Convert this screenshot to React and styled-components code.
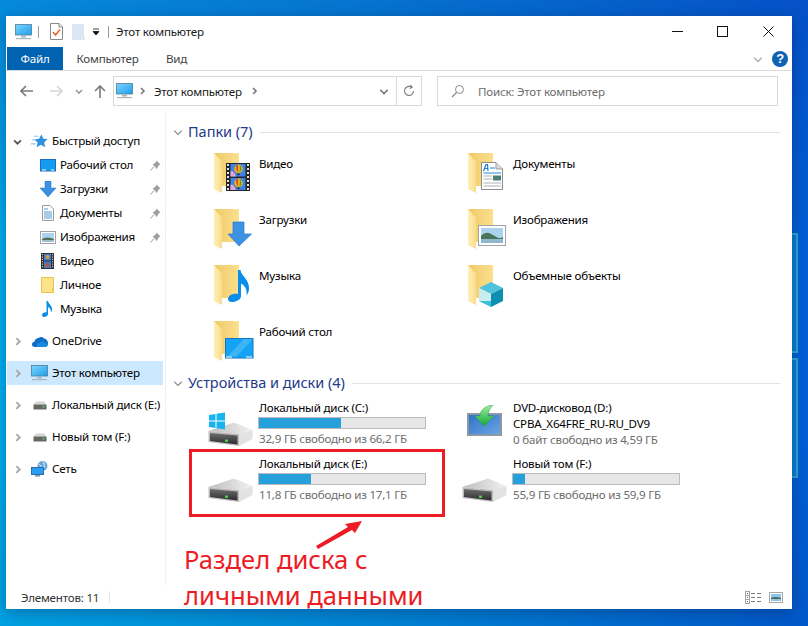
import React from "react";
import styled, { createGlobalStyle } from "styled-components";

const GlobalStyle = createGlobalStyle`
  html, body { margin: 0; padding: 0; height: 100%; overflow: hidden; }
  body { font-family: "Noto Sans", "Open Sans", sans-serif; font-size: 11.6px; letter-spacing: -0.22px; color: #000; }
  * { box-sizing: border-box; }
`;

const Desktop = styled.div`
  position: relative;
  width: 808px;
  height: 626px;
  padding: 16px 16px 17px 6px;
  background:
    linear-gradient(180deg, rgba(20, 50, 170, 0.3) 0, rgba(20, 50, 170, 0) 40%, rgba(0, 40, 120, 0) 70%, rgba(0, 30, 100, 0.1) 100%),
    linear-gradient(90deg, #00b0f0 0, #0090e0 45%, #005ed4 100%);
`;

const BackWindow = styled.div`
  position: absolute;
  left: 786px;
  top: ${(p) => p.$top}px;
  width: 12px;
  height: 120px;
  border: 2px solid #2fa8d0;
  background: #0a7ed8;
`;

const Win = styled.div`
  position: relative;
  display: flex;
  flex-direction: column;
  height: 100%;
  background: #fff;
  box-shadow: 0 3px 14px rgba(0, 20, 60, 0.35);
`;

const TitleBar = styled.div`
  display: flex;
  align-items: center;
  height: 31px;
  padding: 0 1px 0 9px;
`;

const QuickIcon = styled.span`
  display: flex;
  margin-left: ${(p) => p.$ml || 0}px;
  margin-right: ${(p) => p.$mr || 0}px;
`;

const Sep = styled.span`
  width: 1px;
  height: 12px;
  background: #9a9a9a;
  margin-right: ${(p) => p.$mr || 0}px;
`;

const TitleText = styled.span`
  flex: 1;
  color: #1a1a1a;
`;

const WinButton = styled.button`
  display: flex;
  align-items: center;
  justify-content: center;
  width: 45.5px;
  height: 31px;
  padding: 0;
  border: 0;
  background: none;
`;

const TabRow = styled.div`
  display: flex;
  align-items: center;
  height: 24px;
  padding-left: 1px;
  padding-right: 4px;
  border-bottom: 1px solid #dadada;
`;

const Tab = styled.div`
  display: flex;
  align-items: center;
  justify-content: center;
  height: 23px;
  width: ${(p) => p.$w}px;
  background: ${(p) => (p.$active ? "#0063b1" : "transparent")};
  color: ${(p) => (p.$active ? "#fff" : "#444")};
`;

const TabFill = styled.div`
  flex: 1;
`;

const HelpDot = styled.span`
  display: flex;
  align-items: center;
  justify-content: center;
  width: 16px;
  height: 16px;
  margin-left: 9px;
  border-radius: 50%;
  background: #0f62b4;
  color: #fff;
  font-family: "Liberation Sans", sans-serif;
  font-size: 13px;
  font-weight: 700;
`;

const NavRow = styled.div`
  display: flex;
  align-items: flex-start;
  height: 42px;
  padding: 5px 14px 0 0;
`;

const NavButtons = styled.div`
  display: flex;
  align-items: center;
  flex: none;
  width: 107px;
  height: 30px;
  padding-left: 12px;
`;

const NavSlot = styled.span`
  display: flex;
  justify-content: center;
  flex: none;
  width: ${(p) => p.$w}px;
  margin-left: ${(p) => p.$ml || 0}px;
`;

const AddressBox = styled.div`
  display: flex;
  align-items: center;
  flex: none;
  width: 309px;
  height: 30px;
  border: 1px solid #d9d9d9;
  padding-left: 2px;
`;

const AddressText = styled.span`
  margin: 0 8px;
  color: #1a1a1a;
`;

const AddressFill = styled.span`
  flex: 1;
`;

const AddressTail = styled.span`
  display: flex;
  align-items: center;
  justify-content: center;
  width: ${(p) => p.$w}px;
  height: 100%;
  border-left: ${(p) => (p.$line ? "1px solid #d9d9d9" : "0")};
`;

const SearchBox = styled.div`
  display: flex;
  align-items: center;
  flex: 1;
  height: 30px;
  margin-left: 15px;
  padding-left: 13px;
  gap: 13px;
  border: 1px solid #d9d9d9;
  color: #6d6d6d;
`;

const Body = styled.div`
  display: flex;
  flex: 1;
  min-height: 0;
`;

const Sidebar = styled.nav`
  flex: none;
  width: 160px;
  padding: 16px 0 0 1px;
  border-right: 1px solid #f0f0f0;
`;

const SideGroup = styled.div`
  margin-bottom: 8px;
`;

const SideRow = styled.div`
  display: flex;
  align-items: center;
  width: 156px;
  height: 24px;
  white-space: nowrap;
  padding-left: ${(p) => (p.$child ? 32 : 4)}px;
  background: ${(p) => (p.$selected ? "#cce8ff" : "transparent")};
`;

const SideChevron = styled.span`
  display: flex;
  justify-content: center;
  flex: none;
  width: 12px;
  margin-right: 8px;
`;

const SideIcon = styled.span`
  display: flex;
  justify-content: center;
  flex: none;
  width: 17px;
  margin-right: ${(p) => (p.$child ? 4 : 4)}px;
`;

const SideLabel = styled.span`
  flex: 1;
  padding-bottom: 2px;
`;

const Pin = styled.span`
  display: flex;
  margin-right: 2px;
`;

const Main = styled.main`
  position: relative;
  flex: 1;
  padding: 9px 12px 0 7px;
`;

const GroupHead = styled.div`
  display: flex;
  align-items: center;
  height: 20px;
  margin-top: ${(p) => p.$mt || 0}px;
  color: #1e3a8a;
  font-size: 14.5px;
  letter-spacing: -0.03px;
`;

const GroupTitle = styled.span`
  margin: -2px 7px 0 5px;
`;

const GroupLine = styled.span`
  flex: 1;
  height: 1px;
  background: #e2e2e2;
`;

const TileGrid = styled.div`
  display: grid;
  grid-template-columns: 254px 254px;
  grid-auto-rows: 56px;
  margin: ${(p) => p.$mt}px 0 0 35px;
`;

const Tile = styled.div`
  display: flex;
  align-items: flex-start;
`;

const Thumb = styled.span`
  display: flex;
  flex: none;
  width: 51px;
  height: 56px;
  padding-left: ${(p) => p.$pl || 0}px;
  padding-top: ${(p) => p.$pt || 0}px;
`;

const TileName = styled.div`
  height: 16px;
  line-height: 15px;
  margin-top: ${(p) => p.$mt || 0}px;
`;

const TileInfo = styled.div`
  display: flex;
  flex-direction: column;
`;

const UsageBar = styled.div`
  width: 168px;
  height: 12px;
  margin: 1px 0 2px -1px;
  border: 1px solid #bcbcbc;
  background: #e6e6e6;
`;

const UsageFill = styled.div`
  height: 100%;
  background: #26a0da;
`;

const TileSub = styled.div`
  height: 16px;
  line-height: 16px;
  color: #6d6d6d;
`;

const StatusBar = styled.div`
  display: flex;
  align-items: center;
  height: 24px;
  padding: 0 9px 0 15px;
  color: #333;
`;

const StatusSep = styled.span`
  width: 1px;
  height: 12px;
  margin-left: 10px;
  background: #e6e6e6;
`;

const StatusFill = styled.span`
  flex: 1;
`;

const ViewIcons = styled.span`
  display: flex;
  align-items: center;
  gap: 7px;
`;

const HighlightBox = styled.div`
  position: absolute;
  left: 183px;
  top: 433px;
  width: 256px;
  height: 68px;
  border: 3px solid #ed1c24;
`;

const NoteArrow = styled.svg`
  position: absolute;
  left: 308px;
  top: 502px;
`;

const NoteText = styled.div`
  position: absolute;
  left: 178px;
  top: 526px;
  color: #ed1c24;
  font-size: 25.6px;
  letter-spacing: 0;
  line-height: 36px;
  white-space: nowrap;
`;

/* ---- drawn icons ---- */

const Chevron = ({ dir = "right", size = 8, color = "#8a8a8a", width = 1.6 }) => {
  const d = {
    right: "M3 1 L6 4 L3 7",
    down: "M1 3 L4 6 L7 3",
  }[dir];
  return (
    <svg width={size} height={size} viewBox="0 0 8 8" fill="none">
      <path d={d} stroke={color} strokeWidth={width} />
    </svg>
  );
};

const Pc = () => (
  <svg width="17" height="16" viewBox="0 0 17 16">
    <defs>
      <linearGradient id="pcGrad" x1="0" y1="0" x2="1" y2="1">
        <stop offset="0" stopColor="#7fd4fb" />
        <stop offset="1" stopColor="#1b9fec" />
      </linearGradient>
    </defs>
    <rect x="0.5" y="0.5" width="16" height="10.5" fill="url(#pcGrad)" stroke="#4f7d9c" strokeWidth="0.8" />
    <rect x="6" y="11.5" width="5" height="2" fill="#a9b4bc" />
    <rect x="1" y="14" width="15" height="1.2" fill="#a9b4bc" />
  </svg>
);

const CheckDoc = () => (
  <svg width="13" height="17" viewBox="0 0 13 17">
    <path d="M0.5 0.5 H9 L12.5 4 V16.5 H0.5 Z" fill="#fff" stroke="#8a8a8a" />
    <path d="M9 0.5 V4 H12.5" fill="#eee" stroke="#8a8a8a" />
    <path d="M3 9 L5.5 12 L10 6.5" fill="none" stroke="#e8622a" strokeWidth="1.6" />
  </svg>
);

const BlankDoc = () => (
  <svg width="13" height="16" viewBox="0 0 13 16">
    <path d="M0 0 H12 V13 H10 V16 H0 Z" fill="#dce5f3" />
    <rect x="10.5" y="13.5" width="2" height="2" fill="#c9cfd8" />
  </svg>
);

const MiniFolder = () => (
  <svg width="13" height="16" viewBox="0 0 13 16">
    <path d="M0.5 0.5 H12.5 V15.5 H0.5 Z" fill="#fde38a" stroke="#e9c34f" />
    <rect x="11" y="11" width="2" height="3" fill="#f3c94f" />
  </svg>
);

const Star = () => (
  <svg width="18" height="16" viewBox="0 0 18 16">
    <path d="M11 1 L13 5.5 L17.5 6 L14 9.5 L15 14.5 L10.5 12 L6 14.5 L7 9.5 L3.5 6.5 L8.5 5.5 Z" fill="#2f8fe0" />
    <path d="M3 3 H8 M1 7 H5 M0 11 H5" stroke="#8cc4f0" strokeWidth="1.2" />
  </svg>
);

const SideDesktop = () => (
  <svg width="16" height="13" viewBox="0 0 16 13">
    <rect x="0.5" y="0.5" width="15" height="11.5" fill="#149cf0" stroke="#1a6fc0" />
    <path d="M2 11 H6 M11 11 H14" stroke="#fff" />
  </svg>
);

const DownArrow = ({ w = 16, h = 16 }) => (
  <svg width={w} height={h} viewBox="0 0 16 16">
    <path d="M5 0 H11 V7 H16 L8 16 L0 7 H5 Z" fill="#3a8fe0" stroke="#2a72c0" strokeWidth="0.5" />
  </svg>
);

const SideDoc = () => (
  <svg width="12" height="16" viewBox="0 0 12 16">
    <path d="M0.5 0.5 H8 L11.5 4 V15.5 H0.5 Z" fill="#fff" stroke="#9a9a9a" />
    <path d="M2 4 H6 M2 7 H10 M2 9 H10 M2 11 H10 M2 13 H10" stroke="#3a8fd0" strokeWidth="0.9" />
  </svg>
);

const SidePicture = () => (
  <svg width="16" height="13" viewBox="0 0 16 13">
    <rect x="0.5" y="0.5" width="15" height="12" fill="#fff" stroke="#a3a3a3" />
    <rect x="2" y="2" width="12" height="9" fill="#a8d2f0" />
    <path d="M2 8 Q7 5 14 8 V9 H2 Z" fill="#4f6f58" />
    <rect x="2" y="9" width="12" height="2" fill="#9fc0c8" />
  </svg>
);

const SideFilm = () => (
  <svg width="13" height="16" viewBox="0 0 13 16">
    <rect width="13" height="16" fill="#333" />
    <rect x="3" y="1" width="7" height="6.5" fill="#3f7fd8" />
    <rect x="3" y="8.5" width="7" height="6.5" fill="#3f7fd8" />
    <circle cx="6.5" cy="4" r="2" fill="#d8a030" />
    <circle cx="6.5" cy="12" r="2" fill="#c8502a" />
    <path d="M1.5 1 V15 M11.5 1 V15" stroke="#ccc" strokeWidth="1" strokeDasharray="1.2 1.2" />
  </svg>
);

const Note = ({ w = 11, h = 16 }) => (
  <svg width={w} height={h} viewBox="0 0 11 16">
    <path
      d="M4.5 0 H6 C6.3 3 10.5 4.5 10 9 C9.8 10.5 9.2 11 8.8 11.3 C9.2 8.5 7.8 7 6 6 V13 C6 15 3.8 16 2 16 C0.5 16 0 15 0 14 C0 12.4 2 11 4.5 11.3 Z"
      fill="#0a8fe8"
    />
  </svg>
);

const Cloud = () => (
  <svg width="16" height="11" viewBox="0 0 16 11">
    <path d="M3 11 C0.8 11 0 9.6 0 8.4 C0 7 1 6 2.4 5.8 C2.8 3.6 4.6 2 6.6 2 C8 0.6 10.8 0.4 12 2.6 C14.6 3 16 5 16 7.4 C16 9.6 14.6 11 13 11 Z" fill="#0f6cc4" />
    <path d="M5 11 C4 9 5 7 7.4 6.8 C8.6 5 12 5 13 7.2 C15 7 16 8 16 8.5 C15.6 10 14.6 11 13 11 Z" fill="#1a8ae0" />
  </svg>
);

const SmallDrive = () => (
  <svg width="14" height="9" viewBox="0 0 14 9">
    <path d="M0.5 3.5 L3 0.5 H11 L13.5 3.5 Z" fill="#d4d4d4" />
    <rect x="0.5" y="3.5" width="13" height="5" fill="#666" />
    <rect x="9.5" y="5" width="2" height="1.4" fill="#5ad05a" />
  </svg>
);

const Network = () => (
  <svg width="17" height="16" viewBox="0 0 17 16">
    <circle cx="11.5" cy="5" r="5" fill="#6aa8dc" />
    <path d="M8 3 Q11 5 10 8 M12 0.5 Q14 3 13 7" fill="none" stroke="#d8ecf8" />
    <rect x="0.5" y="6.5" width="12" height="7" fill="#2a9ef0" stroke="#2a6fa8" />
    <rect x="4" y="14" width="5" height="1.6" fill="#7a9ab8" />
  </svg>
);

const PinIcon = () => (
  <svg width="11" height="11" viewBox="0 0 11 11">
    <path d="M6.5 0.5 L10.5 4.5 L9 5 L7.5 7.5 L7 9 L2.5 4 L4 3.8 L6 2 Z" fill="#9d9d9d" />
    <path d="M4 6.5 L0.5 10.5" stroke="#9d9d9d" />
  </svg>
);

const FilmFrame = ({ y, h }) => (
  <g>
    <rect x="16.5" y={y} width="15" height={h} fill="#3d82e6" />
    <path d={`M16.5 ${y + h} V${y + h - 5} Q19 ${y + h - 7} 22 ${y + h} Z`} fill="#e6a6d2" />
    <circle cx="24.5" cy={y + 5} r="4.4" fill="#e0b020" />
    <path d={`M22.5 ${y + 1} Q21.5 ${y + 5} 24 ${y + 9} Q23.5 ${y + 5} 24 ${y + 1} Z`} fill="#d8362a" />
    <path d={`M26 ${y + 1} Q28.5 ${y + 5} 25.5 ${y + 9} Q26.5 ${y + 5} 26 ${y + 1} Z`} fill="#2e9a4a" />
    <rect x="23.5" y={y + 9.5} width="2" height="1.6" fill="#222" />
  </g>
);

const folderOverlays = {
  video: (
    <g>
      <rect x="12" y="10" width="24" height="28" fill="#262626" />
      <path d="M14 11 V38 M34 11 V38" stroke="#e4e4e4" strokeWidth="2" strokeDasharray="2 2" />
      <FilmFrame y={11} h={12.5} />
      <FilmFrame y={25} h={12} />
    </g>
  ),
  download: (
    <path d="M19 13 H30 V25 H37.5 L25 37 L14 25 H19 Z" fill="#3d93e3" stroke="#2c79c8" strokeWidth="0.7" />
  ),
  music: (
    <path
      d="M24 5 H26.5 C27 11 35.5 14 35 24 C34.8 27.5 33.5 29 32.5 30 C33.5 24 30 20 27 18.5 V31 C27 35 21 37 17.5 37 C15 37 14 35.5 14 34 C14 30.5 19 28 24 29 Z"
      fill="#0a8fe8"
    />
  ),
  desktop: (
    <g>
      <rect x="11.5" y="17.5" width="27.5" height="19.5" fill="#15a3f5" stroke="#1476c0" />
      <path d="M14 35 L30 18 H38 V19 L22 36 Z" fill="#3bb4f8" />
      <path d="M12 36 H18 M32 36 H38" stroke="#fff" />
    </g>
  ),
  docs: (
    <g>
      <path d="M13.5 9.5 H28 L34.5 16 V36.5 H13.5 Z" fill="#fff" stroke="#8c8c8c" />
      <path d="M28 9.5 V16 H34.5" fill="#ddd" stroke="#9a9a9a" />
      <path d="M15.5 18 L18 11.5 H19.5 L20 18 M17 15.5 H20" fill="none" stroke="#1a7ad8" strokeWidth="1.2" />
      <path d="M22 15 H27 M15.5 20 H33" stroke="#1a8ad8" strokeWidth="1" />
      <path d="M15.5 23 H24 M15.5 26 H24 M15.5 30 H33 M15.5 33 H33" stroke="#b0b0b0" />
      <rect x="25" y="22.5" width="8" height="5" fill="#4c7f78" />
    </g>
  ),
  picture: (
    <g>
      <rect x="10.5" y="16.5" width="27" height="20" fill="#fff" stroke="#a3a3a3" />
      <rect x="13" y="19" width="22" height="15" fill="#a9d3ee" />
      <path d="M13 27 Q18 21 25 26 T35 28 V30 H13 Z" fill="#4a7458" />
      <rect x="13" y="30" width="22" height="4" fill="#8fb8cc" />
    </g>
  ),
  cube: (
    <g>
      <path d="M11 23 L23 17 L35 23 L23 29 Z" fill="#4fc3dc" />
      <path d="M11 23 L23 29 V42 L11 36 Z" fill="#c8eef2" />
      <path d="M35 23 L23 29 V42 L35 36 Z" fill="#0f8fb0" />
      <path d="M11 36 L23 42 V36 Z" fill="#3cc0d4" />
    </g>
  ),
};

const BigFolder = ({ kind }) => (
  <svg width="44" height="44" viewBox="0 0 44 44">
    <defs>
      <linearGradient id="folderBack" x1="0" y1="0" x2="1" y2="0">
        <stop offset="0" stopColor="#f0c968" />
        <stop offset="1" stopColor="#fbe08e" />
      </linearGradient>
      <linearGradient id="folderFlap" x1="0" y1="0" x2="1" y2="0">
        <stop offset="0" stopColor="#fff0b8" />
        <stop offset="1" stopColor="#f9dc8a" />
      </linearGradient>
    </defs>
    <rect x="0" y="0" width="25" height="33" fill="url(#folderBack)" />
    <path d="M0 0 L8 9 V40 L0 36 Z" fill="url(#folderFlap)" />
    {folderOverlays[kind]}
  </svg>
);

const BigDrive = ({ system }) => (
  <svg width="45" height="35" viewBox="0 0 45 35">
    <defs>
      <linearGradient id="driveTop" x1="0" y1="0" x2="1" y2="0">
        <stop offset="0" stopColor="#bcbcbc" />
        <stop offset="1" stopColor="#f2f2f2" />
      </linearGradient>
      <linearGradient id="driveSlot" x1="0" y1="0" x2="0" y2="1">
        <stop offset="0" stopColor="#6e6e6e" />
        <stop offset="1" stopColor="#2c2c2c" />
      </linearGradient>
    </defs>
    <path d="M0.5 19 L26 10.5 L44.5 18 L31 22 Z" fill="url(#driveTop)" />
    <path d="M31 22 L44.5 18 V27 L31 34 Z" fill="#e2e2e2" />
    <path d="M0.5 19 L31 22 V34 L0.5 30 Z" fill="#bdbdbd" />
    <path d="M2 21 L29.5 23.5 V32.5 L2 29 Z" fill="url(#driveSlot)" />
    <rect x="17" y="27.5" width="3" height="2.4" fill="#4fd04f" />
    {system && (
      <g fill="#18b4f0">
        <path d="M1 3 L7.5 2 V8.5 H1 Z" />
        <path d="M8.5 1.8 L17 0.5 V8.5 H8.5 Z" />
        <path d="M1 9.5 H7.5 V16 L1 15 Z" />
        <path d="M8.5 9.5 H17 V17.5 L8.5 16.2 Z" />
      </g>
    )}
  </svg>
);

const DvdIcon = () => (
  <svg width="36" height="31" viewBox="0 0 36 31">
    <defs>
      <linearGradient id="dvdGreen" x1="0" y1="0" x2="0" y2="1">
        <stop offset="0" stopColor="#9cf09a" />
        <stop offset="1" stopColor="#12a83a" />
      </linearGradient>
      <linearGradient id="dvdBlue" x1="0" y1="0" x2="1" y2="1">
        <stop offset="0" stopColor="#2f6fc4" />
        <stop offset="1" stopColor="#6aa8e4" />
      </linearGradient>
    </defs>
    <rect x="1" y="9" width="33" height="21" fill="url(#dvdBlue)" stroke="#8c98a4" strokeWidth="2" />
    <path d="M26 0 C18 1 13 5 13 11 H8 L17 21 L27 11 H21 C21 7 23 3 26 0 Z" fill="url(#dvdGreen)" stroke="#2a9a48" strokeWidth="0.5" />
  </svg>
);

const DetailsView = () => (
  <svg width="17" height="13" viewBox="0 0 17 13">
    <rect x="0.5" y="0.5" width="4" height="12" fill="#fff" stroke="#a0a0a0" />
    <path d="M0 4.5 H5 M0 8.5 H5" stroke="#a0a0a0" />
    <rect x="2" y="2" width="1" height="1" fill="#555" />
    <rect x="2" y="6" width="1" height="1" fill="#3a8fe0" />
    <rect x="2" y="10" width="1" height="1" fill="#c8322a" />
    <path d="M6 2.5 H10 M12 2.5 H16 M6 6.5 H10 M12 6.5 H16 M6 10.5 H10 M12 10.5 H16" stroke="#7a7a7a" />
  </svg>
);

const TilesView = () => (
  <svg width="14" height="11" viewBox="0 0 14 11">
    <rect x="0.5" y="0.5" width="13" height="10" fill="#fff" stroke="#a6a6a6" />
    <rect x="2" y="2" width="10" height="7" fill="#8ec4f0" />
    <path d="M2 6 Q6 4 12 6 V7 H2 Z" fill="#4a6a54" />
  </svg>
);

const sideQuick = [
  { label: "Рабочий стол", icon: <SideDesktop />, pin: true },
  { label: "Загрузки", icon: <DownArrow />, pin: true },
  { label: "Документы", icon: <SideDoc />, pin: true },
  { label: "Изображения", icon: <SidePicture />, pin: true },
  { label: "Видео", icon: <SideFilm /> },
  { label: "Личное", icon: <MiniFolder /> },
  { label: "Музыка", icon: <Note /> },
];

const sideRoots = [
  { label: "OneDrive", icon: <Cloud /> },
  { label: "Этот компьютер", icon: <Pc />, selected: true },
  { label: "Локальный диск (E:)", icon: <SmallDrive /> },
  { label: "Новый том (F:)", icon: <SmallDrive /> },
  { label: "Сеть", icon: <Network /> },
];

const folders = [
  { name: "Видео", kind: "video" },
  { name: "Документы", kind: "docs" },
  { name: "Загрузки", kind: "download" },
  { name: "Изображения", kind: "picture" },
  { name: "Музыка", kind: "music" },
  { name: "Объемные объекты", kind: "cube" },
  { name: "Рабочий стол", kind: "desktop" },
];

const drives = [
  { name: "Локальный диск (C:)", used: 49.5, free: "32,9 ГБ свободно из 66,2 ГБ", system: true },
  { name: "DVD-дисковод (D:)", disc: "CPBA_X64FRE_RU-RU_DV9", free: "0 байт свободно из 4,59 ГБ" },
  { name: "Локальный диск (E:)", used: 31.5, free: "11,8 ГБ свободно из 17,1 ГБ" },
  { name: "Новый том (F:)", used: 7, free: "55,9 ГБ свободно из 59,9 ГБ" },
];

export default function App() {
  return (
    <Desktop>
      <GlobalStyle />
      <BackWindow $top={233} />
      <BackWindow $top={358} />
      <Win>
        <TitleBar>
          <QuickIcon $mr={6}><Pc /></QuickIcon>
          <Sep $mr={11} />
          <QuickIcon $mr={9}><CheckDoc /></QuickIcon>
          <QuickIcon $mr={7}><BlankDoc /></QuickIcon>
          <QuickIcon $mr={8}>
            <svg width="8" height="8" viewBox="0 0 8 8">
              <path d="M1 1 H7 M1 3.5 H7 L4 7 Z" stroke="#111" fill="#111" strokeWidth="0.8" />
            </svg>
          </QuickIcon>
          <Sep $mr={7} />
          <TitleText>Этот компьютер</TitleText>
          <WinButton>
            <svg width="11" height="11" viewBox="0 0 11 11"><path d="M0 5.5 H11" stroke="#111" /></svg>
          </WinButton>
          <WinButton>
            <svg width="11" height="11" viewBox="0 0 11 11"><rect x="0.5" y="0.5" width="10" height="10" fill="none" stroke="#111" /></svg>
          </WinButton>
          <WinButton>
            <svg width="11" height="11" viewBox="0 0 11 11"><path d="M0.5 0.5 L10.5 10.5 M10.5 0.5 L0.5 10.5" stroke="#111" /></svg>
          </WinButton>
        </TitleBar>

        <TabRow>
          <Tab $active $w={56}>Файл</Tab>
          <Tab $w={89}>Компьютер</Tab>
          <Tab $w={49}>Вид</Tab>
          <TabFill />
          <Chevron dir="down" size={10} color="#aaa" width={1} />
          <HelpDot>?</HelpDot>
        </TabRow>

        <NavRow>
          <NavButtons>
            <NavSlot $w={16}>
              <svg width="13" height="12" viewBox="0 0 13 12" fill="none"><path d="M6 1 L1 6 L6 11 M1 6 H13" stroke="#7a7a7a" strokeWidth="1.6" /></svg>
            </NavSlot>
            <NavSlot $w={16} $ml={14}>
              <svg width="13" height="12" viewBox="0 0 13 12" fill="none"><path d="M7 1 L12 6 L7 11 M0 6 H12" stroke="#d6d6d6" strokeWidth="1.6" /></svg>
            </NavSlot>
            <NavSlot $w={8} $ml={11}>
              <Chevron dir="down" color="#9a9a9a" size={8} />
            </NavSlot>
            <NavSlot $w={16} $ml={9}>
              <svg width="12" height="13" viewBox="0 0 12 13" fill="none"><path d="M1 6 L6 1 L11 6 M6 1 V13" stroke="#7a7a7a" strokeWidth="1.6" /></svg>
            </NavSlot>
          </NavButtons>
          <AddressBox>
            <Pc />
            <QuickIcon $ml={5}><Chevron color="#777" /></QuickIcon>
            <AddressText>Этот компьютер</AddressText>
            <Chevron color="#777" />
            <AddressFill />
            <AddressTail $w={25}><Chevron dir="down" size={10} color="#777" width={1.3} /></AddressTail>
            <AddressTail $w={25} $line>
              <svg width="12" height="12" viewBox="0 0 12 12" fill="none">
                <path d="M10.5 6 A4.5 4.5 0 1 1 8.5 2.2" stroke="#7a7a7a" strokeWidth="1.1" />
                <path d="M7.5 0 L9.2 2.4 L6.6 3.6" stroke="#7a7a7a" strokeWidth="1.1" />
              </svg>
            </AddressTail>
          </AddressBox>
          <SearchBox>
            <svg width="14" height="14" viewBox="0 0 14 14" fill="none">
              <circle cx="8.5" cy="5.5" r="4" stroke="#8a8a8a" />
              <path d="M5.5 8.5 L1 13" stroke="#8a8a8a" strokeWidth="1.2" />
            </svg>
            Поиск: Этот компьютер
          </SearchBox>
        </NavRow>

        <Body>
          <Sidebar>
            <SideGroup>
              <SideRow>
                <SideChevron><Chevron dir="down" color="#555" size={9} /></SideChevron>
                <SideIcon><Star /></SideIcon>
                <SideLabel>Быстрый доступ</SideLabel>
              </SideRow>
              {sideQuick.map((item) => (
                <SideRow $child key={item.label}>
                  <SideIcon $child>{item.icon}</SideIcon>
                  <SideLabel>{item.label}</SideLabel>
                  {item.pin && <Pin><PinIcon /></Pin>}
                </SideRow>
              ))}
            </SideGroup>
            {sideRoots.map((item) => (
              <SideGroup key={item.label}>
                <SideRow $selected={item.selected}>
                  <SideChevron><Chevron color="#a6a6a6" size={9} /></SideChevron>
                  <SideIcon>{item.icon}</SideIcon>
                  <SideLabel>{item.label}</SideLabel>
                </SideRow>
              </SideGroup>
            ))}
          </Sidebar>

          <Main>
            <GroupHead>
              <Chevron dir="down" size={10} color="#8a8a8a" width={0.9} />
              <GroupTitle>Папки (7)</GroupTitle>
              <GroupLine />
            </GroupHead>
            <TileGrid $mt={6}>
              {folders.map((f) => (
                <Tile key={f.name}>
                  <Thumb $pl={6} $pt={5}><BigFolder kind={f.kind} /></Thumb>
                  <TileName $mt={8}>{f.name}</TileName>
                </Tile>
              ))}
            </TileGrid>

            <GroupHead $mt={1}>
              <Chevron dir="down" size={10} color="#8a8a8a" width={0.9} />
              <GroupTitle>Устройства и диски (4)</GroupTitle>
              <GroupLine />
            </GroupHead>
            <TileGrid $mt={7}>
              {drives.map((d) => (
                <Tile key={d.name}>
                  <Thumb $pl={d.disc ? 5 : 0} $pt={d.disc ? 5 : 12}>
                    {d.disc ? <DvdIcon /> : <BigDrive system={d.system} />}
                  </Thumb>
                  <TileInfo>
                    <TileName>{d.name}</TileName>
                    {d.disc ? (
                      <TileName>{d.disc}</TileName>
                    ) : (
                      <UsageBar>
                        <UsageFill style={{ width: `${d.used}%` }} />
                      </UsageBar>
                    )}
                    <TileSub>{d.free}</TileSub>
                  </TileInfo>
                </Tile>
              ))}
            </TileGrid>
          </Main>
        </Body>

        <StatusBar>
          Элементов: 11
          <StatusSep />
          <StatusFill />
          <ViewIcons>
            <DetailsView />
            <TilesView />
          </ViewIcons>
        </StatusBar>

        <HighlightBox />
        <NoteArrow width="52" height="32" viewBox="0 0 52 32">
          <path d="M2 28 L34 9 L31 6 L48 3 L41 15 L38 12 L4 31 Z" fill="#ed1c24" />
        </NoteArrow>
        <NoteText>
          Раздел диска с
          <br />
          личными данными
        </NoteText>
      </Win>
    </Desktop>
  );
}
